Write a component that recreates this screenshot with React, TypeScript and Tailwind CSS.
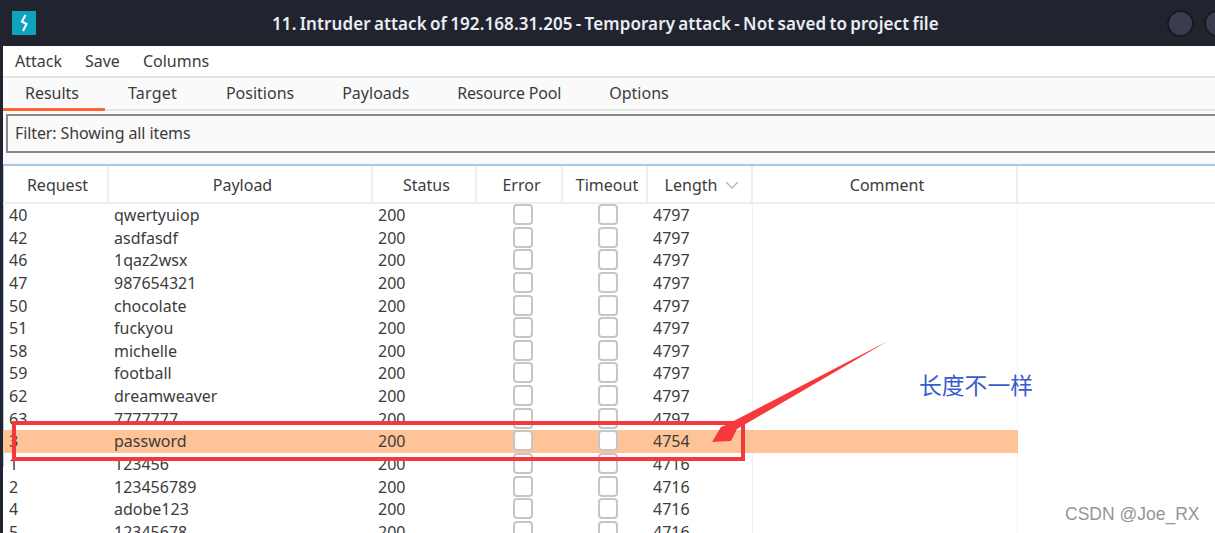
const rows = [
  ['40', 'qwertyuiop', '4797'],
  ['42', 'asdfasdf', '4797'],
  ['46', '1qaz2wsx', '4797'],
  ['47', '987654321', '4797'],
  ['50', 'chocolate', '4797'],
  ['51', 'fuckyou', '4797'],
  ['58', 'michelle', '4797'],
  ['59', 'football', '4797'],
  ['62', 'dreamweaver', '4797'],
  ['63', '7777777', '4797'],
  ['3', 'password', '4754'],
  ['1', '123456', '4716'],
  ['2', '123456789', '4716'],
  ['4', 'adobe123', '4716'],
  ['5', '12345678', '4716'],
]

const gridCols = 'grid grid-cols-[106px_264px_104px_86px_85px_105px_265px] w-[1015px]'

function HeaderCell({ label, arrow }: { label: string; arrow?: boolean }) {
  return (
    <div className="flex items-center justify-center gap-[8px] pl-[5px] pt-[1px] border-r-2 border-[#ededed]">
      <span>{label}</span>
      {arrow && (
        <svg width="14" height="8" viewBox="0 0 14 8" fill="none" stroke="#b5b5b5" strokeWidth="1.3">
          <path d="M1 1l6 6 6-6" />
        </svg>
      )}
    </div>
  )
}

export default function App() {
  return (
    <div className="relative w-[1215px] h-[533px] overflow-hidden bg-white text-[16px] text-[#3c3c3c] font-['Noto_Sans',sans-serif]">
      {/* Title bar */}
      <div className="h-[46px] bg-[#21242e] flex items-center relative">
        <div className="ml-[12px] w-[24px] h-[24px] bg-[#0ba3bd] flex items-center justify-center">
          <svg width="12" height="18" viewBox="0 0 12 18" fill="none" stroke="#eef8fa" strokeWidth="2.2">
            <path d="M7.5 1L4 7.5l4.5 2.5L5 17" />
          </svg>
        </div>
        <div className="absolute left-[272px] top-[11px] text-[#e9edf5] font-semibold text-[17px] tracking-[0.1px] [word-spacing:-1.3px] whitespace-nowrap">
          11. Intruder attack of 192.168.31.205 - Temporary attack - Not saved to project file
        </div>
        <div className="absolute left-[1167px] top-[10px] w-[27px] h-[27px] rounded-full bg-[#3a3d4e] border-2 border-[#171920]" />
        <div className="absolute left-[1204px] top-[10px] w-[27px] h-[27px] rounded-full bg-[#3a3d4e] border-2 border-[#171920]" />
      </div>

      <div className="border-l-[3px] border-[#21242e] h-[487px]">
        {/* Menu bar */}
        <div className="h-[32px] flex items-center gap-[23px] pl-[12px] border-b-2 border-[#e2e2e2]">
          <span>Attack</span>
          <span>Save</span>
          <span>Columns</span>
        </div>

        {/* Tabs */}
        <div className="h-[33px] bg-[#fafafa] flex border-b-2 border-[#e2e4e2]">
          <div className="w-[102px] pr-[4px] flex items-center justify-center border-b-[3px] border-[#ff6633] -mb-[2px]">Results</div>
          <div className="flex items-center pl-[23px] pb-[2px]">
            <span className="tracking-[0.2px]">Target</span>
            <span className="ml-[49px]">Positions</span>
            <span className="ml-[48px]">Payloads</span>
            <span className="ml-[48px] tracking-[-0.2px]">Resource Pool</span>
            <span className="ml-[48px]">Options</span>
          </div>
        </div>

        {/* Filter */}
        <div className="h-[55px] bg-[#fafafa] pt-[3px] pl-[3px] border-b-2 border-[#a8c8ea]">
          <div className="h-[39px] flex items-center pl-[7px] pb-[2px] border-2 border-r-0 border-[#8a8a8a] tracking-[-0.1px]">
            Filter: Showing all items
          </div>
        </div>

        {/* Results table */}
        <div className="shadow-[inset_1px_0_0_#a8c8ea] h-[301px]">
          <div className="h-[38px] border-b-2 border-[#ededed]">
            <div className={`${gridCols} h-full`}>
              <HeaderCell label="Request" />
              <HeaderCell label="Payload" />
              <HeaderCell label="Status" />
              <HeaderCell label="Error" />
              <HeaderCell label="Timeout" />
              <HeaderCell label="Length" arrow />
              <HeaderCell label="Comment" />
            </div>
          </div>
          {rows.map(([req, payload, len]) => {
            const hit = req === '3'
            return (
              <div key={req} className={`${gridCols} h-[22.65px] leading-[22px] ${hit ? 'bg-[#fec397]' : ''}`}>
                <div className="pl-[6px]">{req}</div>
                <div className="pl-[5px]">{payload}</div>
                <div className="pl-[5px]">200</div>
                <div className="flex justify-center pl-[6px]">
                  <div className="w-[20px] h-[21px] bg-white border-2 border-[#c6c6c6] rounded-[4px]" />
                </div>
                <div className="flex justify-center pl-[4px]">
                  <div className="w-[20px] h-[21px] bg-white border-2 border-[#c6c6c6] rounded-[4px]" />
                </div>
                <div className={`pl-[5px] border-r ${hit ? 'border-transparent' : 'border-[#f1f1f1]'}`}>{len}</div>
                <div className={`border-r ${hit ? 'border-transparent' : 'border-[#f4f4f4]'}`} />
              </div>
            )
          })}
        </div>
      </div>

      {/* Annotations */}
      <div className="absolute left-[12px] top-[421px] w-[733px] h-[40px] border-[4px] border-[#f5383c]" />
      <svg className="absolute left-0 top-0 pointer-events-none" width="1215" height="533" viewBox="0 0 1215 533">
        <polygon points="888,341 737,429 731,441 712,442 721,427 728,424" fill="#f5393d" />
      </svg>
      <div className="absolute left-[919px] top-[369px] text-[#3a5bcf] text-[22.8px] leading-[32px] whitespace-nowrap font-['Noto_Sans_CJK_SC',sans-serif]">
        长度不一样
      </div>
      <div className="absolute left-[1065px] top-[503px] text-[#959595] text-[17.5px] leading-[22px] whitespace-nowrap font-['Liberation_Sans',sans-serif]">
        CSDN @Joe_RX
      </div>
    </div>
  )
}
